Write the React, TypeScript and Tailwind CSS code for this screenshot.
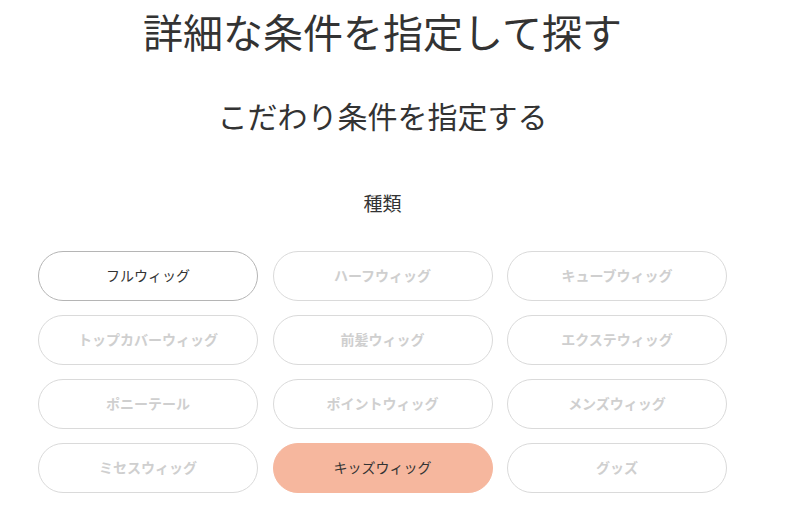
const kinds = [
  { label: "フルウィッグ", state: "selected" },
  { label: "ハーフウィッグ", state: "off" },
  { label: "キューブウィッグ", state: "off" },
  { label: "トップカバーウィッグ", state: "off" },
  { label: "前髪ウィッグ", state: "off" },
  { label: "エクステウィッグ", state: "off" },
  { label: "ポニーテール", state: "off" },
  { label: "ポイントウィッグ", state: "off" },
  { label: "メンズウィッグ", state: "off" },
  { label: "ミセスウィッグ", state: "off" },
  { label: "キッズウィッグ", state: "active" },
  { label: "グッズ", state: "off" },
];

const styles: Record<string, string> = {
  selected: "border border-[#b5b5b5] bg-white text-[#333]",
  active: "border border-[#f6b79e] bg-[#f6b79e] text-[#333]",
  off: "border border-[#dadada] bg-white text-[#cfcfcf] font-bold",
};

const KindButton = ({ label, state }: { label: string; state: string }) => (
  <button className={`h-[50px] w-[220px] rounded-full pb-px text-[14px] ${styles[state]}`}>{label}</button>
);

export default function App() {
  return (
    <div
      className="h-[521px] w-[790px] overflow-hidden bg-white text-[#333]"
      style={{ fontFamily: '"Noto Sans CJK JP", "Noto Sans", sans-serif' }}
    >
      <div className="flex w-[765px] flex-col items-center">
        <h1 className="mt-[3px] text-[40px] leading-[56px]">詳細な条件を指定して探す</h1>
        <h2 className="mt-[36px] text-[30px] leading-[40px]">こだわり条件を指定する</h2>
        <h3 className="mt-[54px] text-[19px] leading-[28px]">種類</h3>
        <div className="mt-[34px] grid grid-cols-3 gap-x-[14.5px] gap-y-[14px]">
          {kinds.map((k) => (
            <KindButton key={k.label} label={k.label} state={k.state} />
          ))}
        </div>
      </div>
    </div>
  );
}
